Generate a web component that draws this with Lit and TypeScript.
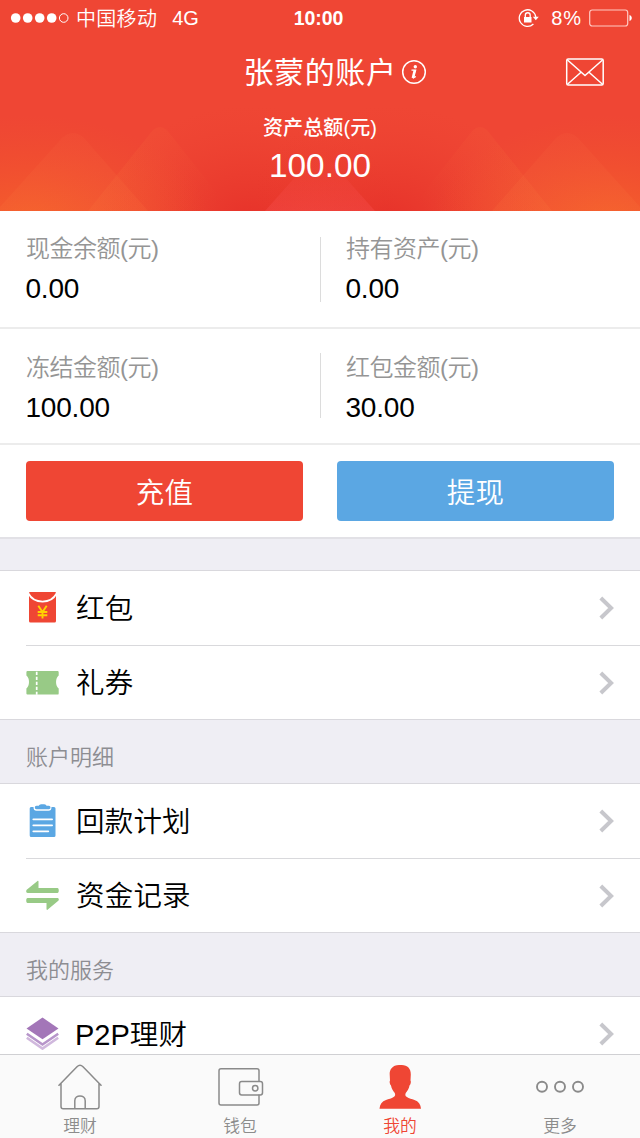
import { LitElement, html, svg, css } from "lit";
import { customElement } from "lit/decorators.js";

const stats = [
  [["现金余额(元)", "0.00"], ["持有资产(元)", "0.00"]],
  [["冻结金额(元)", "100.00"], ["红包金额(元)", "30.00"]],
];

const icons: Record<string, unknown> = {
  packet: svg`
    <path d="M4 1h25a1 1 0 0 1 1 1v28a1.500 1.500 0 0 1-1.500 1.500h-24A1.500 1.500 0 0 1 3 30V2a1 1 0 0 1 1-1z" fill="#ef4634"/>
    <path d="M2.500 2.500C8 13.200 25 13.200 30.500 2.500" fill="none" stroke="#fff" stroke-width="1.700"/>
    <path d="M12.300 14.800l4.200 6.200 4.200-6.200M16.500 20.500v7M11.700 21h9.600M11.700 24.200h9.600" fill="none" stroke="#ffd200" stroke-width="1.900"/>`,
  ticket: svg`
    <path d="M1.500 5h30a1.200 1.200 0 0 1 1.200 1.200v3.200c-3.500 2.800-3.500 10.200 0 13v5a1.200 1.200 0 0 1-1.200 1.200h-30A1.200 1.200 0 0 1 .4 27.400v-5c3.500-2.800 3.500-10.200 0-13V6.200A1.200 1.200 0 0 1 1.500 5z" fill="#98ca86"/>
    <path d="M10.700 5.700v23" stroke="#fff" stroke-width="1.700" stroke-dasharray="3.200 1.800"/>`,
  board: svg`
    <path d="M5 3h2.500c0 3 1 3.700 3 3.700h12c2 0 3-.7 3-3.700H28a1.500 1.500 0 0 1 1.500 1.500v27A1.500 1.500 0 0 1 28 33H5.200a1.500 1.500 0 0 1-1.500-1.500v-27A1.500 1.500 0 0 1 5 3z" fill="#5ba7e3"/>
    <path d="M10.500 1.700h2.300C13.400-.1 20-.1 20.500 1.700h2.300c2.200 0 2.200 3.500 0 3.500H10.500c-2.200 0-2.200-3.500 0-3.500z" fill="#5ba7e3"/>
    <path d="M7.300 15.300h18.800M7.300 21.300h18.800M7.300 27.300h15" stroke="#fff" stroke-width="1.800" stroke-linecap="round"/>`,
  swap: svg`
    <path d="M.7 10.700 11.500 2c.6-.4 1-.1 1 .6v6.400h19c1.700 0 1.700 5 0 5H1.700C.2 14-.3 12.200.7 10.700z" fill="#98ca86"/>
    <path d="M32.300 21.800 21.500 30.700c-.6.400-1 .1-1-.6v-6h-19c-1.700 0-1.700-5 0-5h29.800c1.500 0 2 1.500 1 2.700z" fill="#98ca86"/>`,
  layers: svg`
    <path d="M.8 20.800 16.500 31.600 32.200 20.800" fill="none" stroke="#d0b8dd" stroke-width="2.600"/>
    <path d="M.8 16.800 16.500 27.500 32.200 16.800" fill="none" stroke="#b795ca" stroke-width="2.600"/>
    <path d="M16.500 0 33 11.900 16.500 24 0 11.900z" fill="#fff"/>
    <path d="M16.500 .5 32.500 11.500 16.500 22.300.5 11.500z" fill="#a376b8"/>`,
};

const groups = [
  { title: "", rows: [["packet", "红包"], ["ticket", "礼券"]] },
  { title: "账户明细", rows: [["board", "回款计划"], ["swap", "资金记录"]] },
  { title: "我的服务", rows: [["layers", "P2P理财"]] },
];

const tabs = [
  ["理财", svg`<path d="M2.500 22.700 21 3.800q3-3 6 0l18.500 18.900M5 20.500v23q0 2.300 2.200 2.300h33.600q2.200 0 2.200-2.300v-23M18.800 45.800V37.800c0-6.500 10.400-6.500 10.400 0v8"/>`],
  ["钱包", svg`<path d="M43 18V7.700q0-2-2-2H5q-2 0-2 2v32.300q0 2 2 2h36q2 0 2-2v-8.500"/><rect x="23.500" y="18.500" width="23" height="13.500" rx="2.200"/><circle cx="39.200" cy="25.300" r="2.700"/>`],
  ["我的", svg`<path d="M24 2c6.800-.8 11 3 10.800 9.500l-.3 6c.8 1 .2 4-1 5-.5 3-2 5.500-3.600 7.200-1 1.500-.7 3.500 1 4.300 2 1.500 5 2 7.600 3 4 1.500 6.200 4.200 6.500 8.700H3.500c.3-4.500 2.500-7.200 6.500-8.700 2.600-1 5.600-1.500 7.600-3 1.700-.8 2-2.800 1-4.300-1.600-1.700-3.100-4.200-3.600-7.200-1.200-1-1.800-4-1-5l-.3-6C13.300 6.200 17 1.500 24 2z" fill="#ef4634" stroke="none"/>`],
  ["更多", svg`<g stroke-width="1.900"><circle cx="6" cy="23.800" r="5"/><circle cx="24" cy="23.800" r="5"/><circle cx="42" cy="23.800" r="5"/></g>`],
] as const;

@customElement("app-root")
export class AppRoot extends LitElement {
  static styles = css`
    :host { display: flex; flex-direction: column; width: 640px; height: 1138px; overflow: hidden;
      background: #efeef4; color: #000; font-family: "Liberation Sans", "Noto Sans CJK SC", sans-serif; }
    * { box-sizing: border-box; }
    svg { display: block; flex: none; }
    .header { display: grid; height: 211px; flex: none; background: #ef4634; color: #fff; }
    .art, .head { grid-area: 1 / 1; }
    .head { display: flex; flex-direction: column; z-index: 1; }
    .status { display: grid; grid-template-columns: 1fr auto 1fr; height: 36px; padding: 0 8px 0 10px; align-items: center; font-size: 20px; line-height: 36px; }
    .left, .right { display: flex; align-items: center; }
    .carrier { margin-left: 6px; font-weight: 350; letter-spacing: .3px; padding-top: 2px; line-height: 34px; }
    .net { margin-left: 15px; }
    .clock { font-weight: 700; font-size: 19.500px; letter-spacing: -.1px; padding-right: 5px; }
    .right { justify-content: flex-end; }
    .lock { margin-right: 1px; }
    .pct { margin: 0 7px 0 10px; letter-spacing: .9px; }
    .titlebar { display: grid; grid-template-columns: 1fr auto 1fr; align-items: center; height: 72px; padding: 0 35px; }
    .title { grid-column: 2; display: flex; align-items: center; gap: 4px; margin-left: 30px; font-size: 30px; letter-spacing: .6px; line-height: 44px; }
    .title-text { padding-top: 2px; line-height: 42px; }
    .mail { justify-self: end; }
    .sub { text-align: center; font-size: 20px; font-weight: 500; line-height: 32px; margin-top: 4px; letter-spacing: .1px; }
    .total { text-align: center; font-size: 33.300px; line-height: 42px; margin-top: 1px; }
    .stats { flex: none; display: flex; height: 118px; background: #fff; border-bottom: 2px solid #ececec; }
    .stats-low { height: 116px; }
    .stat { flex: 0 0 320px; display: flex; flex-direction: column; padding: 20px 0 0 26px; }
    .low { padding-top: 21px; }
    .cut { width: 1px; height: 65px; margin: 26px -1px 0 0; background: #dcdcdc; }
    .low-cut { margin-top: 24px; }
    .label { font-size: 24px; line-height: 36px; font-weight: 350; color: #959595; letter-spacing: -.5px; }
    .value { font-size: 28px; line-height: 36px; margin: 4px 0 0 -.5px; letter-spacing: -.2px; }
    .actions { flex: none; display: flex; gap: 34px; height: 94px; padding: 16px 26px 17px; background: #fff; border-bottom: 2px solid #e2e1e6; }
    .btn { flex: 1; height: 60px; border: 0; border-radius: 4px; font: 350 28.500px/60px "Noto Sans CJK SC", sans-serif; letter-spacing: .3px; color: #fff; background: #ef4634; text-align: center; padding: 0; }
    .blue { background: #5ba7e3; }
    .gap { height: 31px; flex: none; }
    .caption { height: 63px; flex: none; padding: 21px 26px 0; font-size: 22px; line-height: 34px; font-weight: 350; color: #8d8d92; }
    .group { flex: none; background: #fff; border-top: 1px solid #d9d8dd; border-bottom: 1px solid #d9d8dd; padding-left: 26px; }
    .row { display: flex; align-items: center; height: 74px; padding-right: 26px; }
    .row + .row { border-top: 1px solid #d9d9dc; }
    .icon { margin-bottom: 1px; }
    .name { flex: 1; margin-left: 17px; padding-top: 1px; font-size: 28.500px; line-height: 42px; font-weight: 350; letter-spacing: .2px; }
    .latin { font-weight: 400; font-size: 29px; letter-spacing: 0; margin-left: -1px; }
    .list { flex: 1; min-height: 0; overflow: hidden; display: flex; flex-direction: column; }
    .tabs { flex: none; display: flex; height: 84px; border-top: 1px solid #d0d0d3; background: #fafafa; }
    .tab { flex: 1; display: flex; flex-direction: column; align-items: center; padding-top: 8px; color: #8c8c8c; }
    .tab-name { font-size: 16.800px; line-height: 24px; margin-top: 4px; font-weight: 350; }
    .active { color: #ef4634; }
  `;

  render() {
    return html`
      <div class="header">
        <svg class="art" width="640" height="211" viewBox="0 0 640 211">
          <defs>
            <radialGradient id="o" r="1" cx="0" cy="0" gradientUnits="userSpaceOnUse" gradientTransform="translate(30 225) scale(180 110)"><stop offset="0" stop-color="#f76a28" stop-opacity=".75"/><stop offset=".5" stop-color="#f56228" stop-opacity=".35"/><stop offset="1" stop-color="#f05a28" stop-opacity="0"/></radialGradient>
            <radialGradient id="r" r="1" cx="0" cy="0" gradientUnits="userSpaceOnUse" gradientTransform="translate(250 220) scale(150 115)"><stop offset="0" stop-color="#e02222" stop-opacity=".55"/><stop offset=".5" stop-color="#e22a24" stop-opacity=".25"/><stop offset="1" stop-color="#e83a2c" stop-opacity="0"/></radialGradient>
            <linearGradient id="t" x1="0" y1="0" x2="0" y2="1"><stop offset="0" stop-color="#ff8650" stop-opacity=".06"/><stop offset="1" stop-color="#ff8640" stop-opacity=".12"/></linearGradient>
            <linearGradient id="f" x1="0" y1=".3" x2="1" y2=".5"><stop offset="0" stop-color="#ff8640" stop-opacity=".14"/><stop offset="1" stop-color="#ff8640" stop-opacity="0"/></linearGradient>
            <linearGradient id="c" x1="0" y1="0" x2="0" y2="1"><stop offset="0" stop-color="#ff5c60" stop-opacity="0"/><stop offset="1" stop-color="#ff5c60" stop-opacity=".26"/></linearGradient>
            <g id="half">
              <path d="M0 100h420v111H0z" fill="url(#r)"/>
              <path d="M0 100h240v111H0z" fill="url(#o)"/>
              <path d="M0 207 62 138q11-10 22 0l64 73H0z" fill="url(#t)"/>
              <path d="M88 211 153 130q7-6 14 0l64 81z" fill="url(#f)"/>
            </g>
          </defs>
          <use href="#half"/>
          <use href="#half" transform="translate(640 0) scale(-1 1)"/>
          <path d="M265 211 313 157q7-6 14 0l48 54z" fill="url(#c)"/>
        </svg>
        <div class="head">
          <div class="status">
            <div class="left">
              <svg width="60" height="12" viewBox="0 0 60 12" fill="#fff"><circle cx="5.700" cy="6" r="4.800"/><circle cx="17.700" cy="6" r="4.800"/><circle cx="29.700" cy="6" r="4.800"/><circle cx="41.700" cy="6" r="4.800"/><circle cx="53.700" cy="6" r="4.300" fill="none" stroke="#fff"/></svg>
              <span class="carrier">中国移动</span><span class="net">4G</span>
            </div>
            <span class="clock">10:00</span>
            <div class="right">
              <svg class="lock" width="22" height="20" viewBox="0 0 22 20"><path d="M15.400 16A8.300 8.300 0 1 1 17.800 9" fill="none" stroke="#fff" stroke-width="1.300"/><path d="M14.800 8.700h6l-3 3.600z" fill="#fff"/><path d="M6 9h7.500v5.500H6z" fill="#fff"/><path d="M7.300 9V7.200c0-3.300 4.900-3.300 4.900 0V9" fill="none" stroke="#fff" stroke-width="1.300"/></svg>
              <span class="pct">8%</span>
              <svg width="43" height="18" viewBox="0 0 43 18"><rect x=".7" y="1" width="38" height="16" rx="2.500" fill="none" stroke="#ffc9c2" stroke-width="1.200"/><path d="M40.500 6c3 .8 3 5.200 0 6z" fill="#fff"/></svg>
            </div>
          </div>
          <div class="titlebar">
            <div class="title"><span class="title-text">张蒙的账户</span>
              <svg width="26" height="26" viewBox="0 0 26 26"><circle cx="13" cy="13" r="11.300" fill="none" stroke="#fff" stroke-width="1.500"/><circle cx="14.300" cy="7.700" r="1.700" fill="#fff"/><path d="M10.500 11.200h4.200l-2 7.500 2.200-1.200" fill="none" stroke="#fff" stroke-width="1.200"/><path d="m13.700 11-2 8" stroke="#fff" stroke-width="2.200"/></svg>
            </div>
            <svg class="mail" width="40" height="30" viewBox="0 0 40 30" fill="none" stroke="#fff" stroke-width="1.500"><rect x="1.700" y="2" width="36.500" height="26" rx="1.500"/><path d="M2.500 3 20 18.500 37.500 3M2.500 27.200l13.500-12M37.500 27.200l-13.500-12"/></svg>
          </div>
          <div class="sub">资产总额(元)</div>
          <div class="total">100.00</div>
        </div>
      </div>
      ${stats.map((pair, i) => html`<div class="stats ${i ? "stats-low" : ""}">
        ${pair.map(([l, v], j) => html`${j ? html`<div class="cut ${i ? "low-cut" : ""}"></div>` : ""}
          <div class="stat ${i ? "low" : ""}"><span class="label">${l}</span><span class="value">${v}</span></div>`)}
      </div>`)}
      <div class="actions"><button class="btn">充值</button><button class="btn blue">提现</button></div>
      <div class="list">
        ${groups.map(g => html`
          ${g.title ? html`<div class="caption">${g.title}</div>` : html`<div class="gap"></div>`}
          <div class="group">${g.rows.map(([icon, name]) => html`<div class="row">
            <svg class="icon" width="33" height="33" viewBox="0 0 33 33">${icons[icon]}</svg>
            <span class="name">${name.startsWith("P2P") ? html`<span class="latin">P2P</span>${name.slice(3)}` : name}</span>
            <svg width="15" height="24" viewBox="0 0 15 24"><path d="m1.800 2 10.300 10L1.800 22" fill="none" stroke="#c7c7cc" stroke-width="4"/></svg>
          </div>`)}</div>`)}
      </div>
      <div class="tabs">
        ${tabs.map(([name, icon], i) => html`<div class="tab ${i === 2 ? "active" : ""}">
          <svg width="48" height="48" viewBox="0 0 48 48" fill="none" stroke="#8a8a8a" stroke-width="1.500">${icon}</svg>
          <span class="tab-name">${name}</span></div>`)}
      </div>`;
  }
}
